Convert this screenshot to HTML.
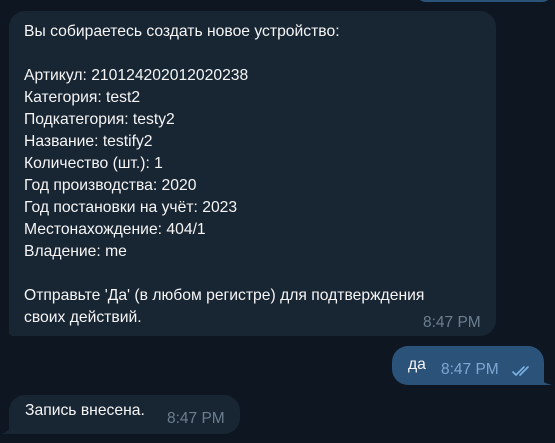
<!DOCTYPE html>
<html><head><meta charset="utf-8"><style>
body{margin:0;width:555px;height:443px;background:#0e1621;position:relative;overflow:hidden;font-family:"Liberation Sans","DejaVu Sans",sans-serif;color:#f5f5f5}
.b{position:absolute;background:#182533;border-radius:16px}
.t{position:absolute;font-size:15.5px;color:#6d7f8f;white-space:nowrap}
.txt{position:absolute;font-size:15.7px;line-height:22px;white-space:pre}
</style></head><body>
<div style="position:absolute;left:416px;top:-10px;width:136px;height:12px;background:#2b5278;border-radius:0 0 10px 10px"></div>
<div class="b" style="left:9px;top:11px;width:487px;height:325px;border-bottom-left-radius:4px"></div>
<div class="txt" style="left:24px;top:21px">Вы собираетесь создать новое устройство:

Артикул: 210124202012020238
Категория: test2
Подкатегория: testy2
Название: testify2
Количество (шт.): 1
Год производства: 2020
Год постановки на учёт: 2023
Местонахождение: 404/1
Владение: me

Отправьте 'Да' (в любом регистре) для подтверждения
своих действий.</div>
<div class="t" style="left:423px;top:314px">8:47 PM</div>
<div class="b" style="left:392px;top:346px;width:152px;height:39px;background:#2b5278;border-bottom-right-radius:4px"></div>
<svg style="position:absolute;left:536px;top:372px" width="18" height="14"><path d="M0 0 Q2 10 16 13 L0 13 Z" fill="#2b5278"/></svg>
<div class="txt" style="left:408px;top:354px">да</div>
<div class="t" style="left:441px;top:361px;color:#7da8d3">8:47 PM</div>
<svg style="position:absolute;left:511px;top:364px" width="24" height="14" fill="none" stroke="#7db4e8" stroke-width="1.6" stroke-linecap="round"><path d="M2 8 L5 11 L13 3"/><path d="M9 11 L17 3"/></svg>
<div class="b" style="left:9px;top:395px;width:231px;height:39px;border-bottom-left-radius:4px"></div>
<svg style="position:absolute;left:1px;top:421px" width="12" height="14"><path d="M12 0 Q10 10 0 13 L12 13 Z" fill="#182533"/></svg>
<div class="txt" style="left:25px;top:400px">Запись внесена.</div>
<div class="t" style="left:167px;top:410px">8:47 PM</div>
</body></html>
